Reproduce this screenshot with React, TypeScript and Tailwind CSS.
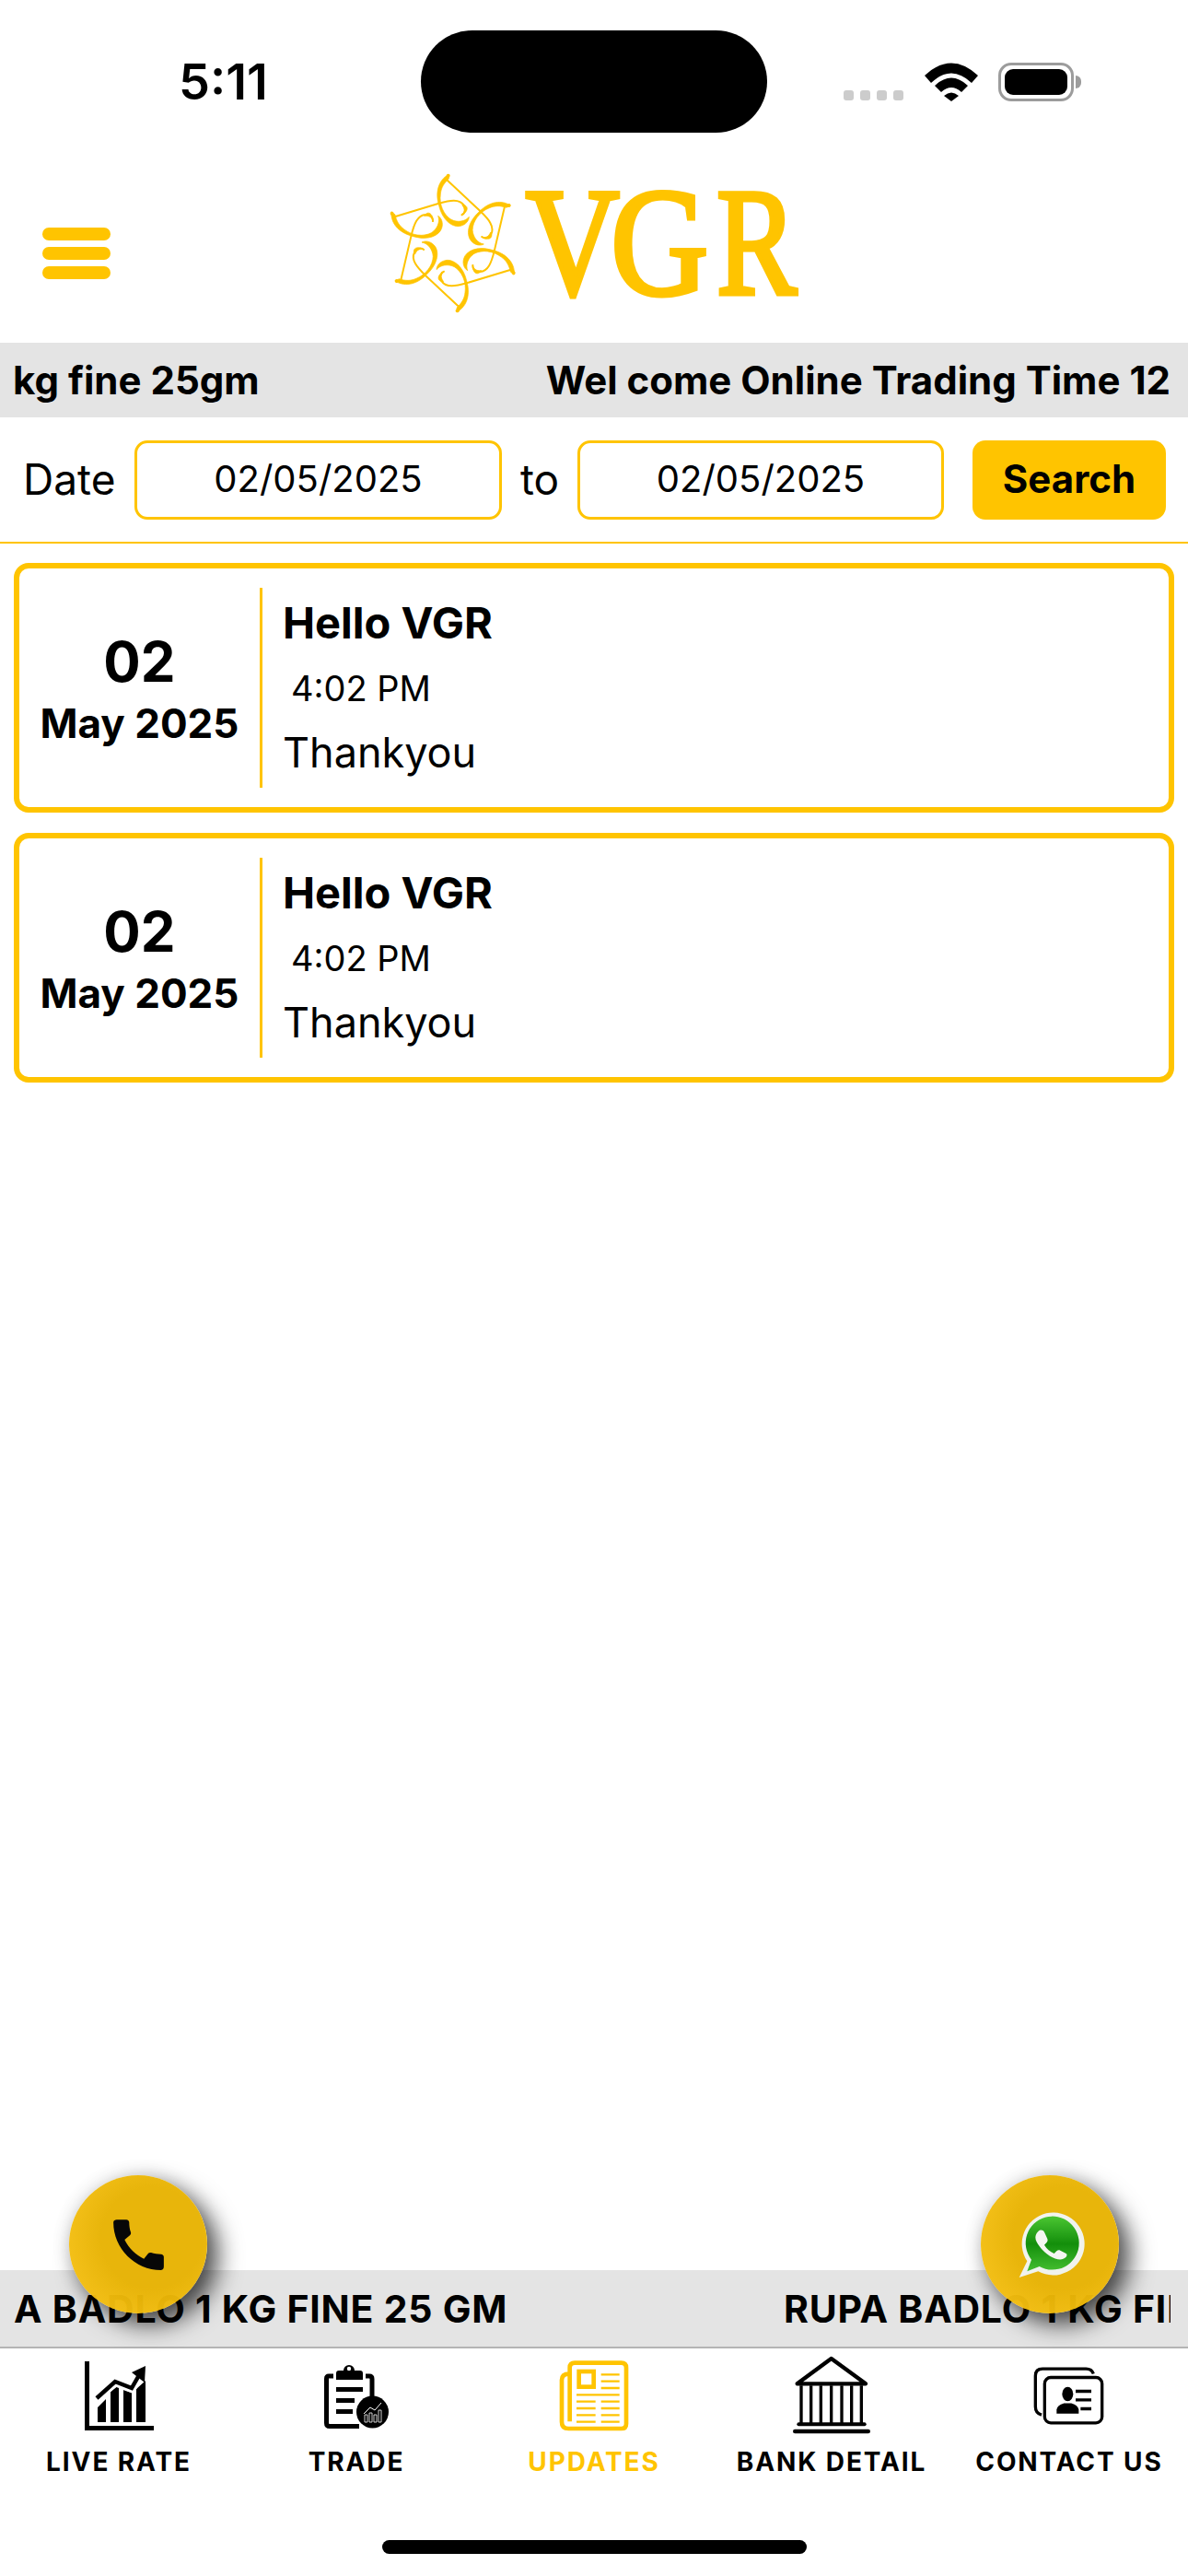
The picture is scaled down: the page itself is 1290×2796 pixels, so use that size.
import { MdCall } from "react-icons/md"

const sixArms = [0, 60, 120, 180, 240, 300]

function Logo() {
  return (
    <svg viewBox="120 51 1350 465" className="w-[450px] h-[155px] shrink-0">
      {/* star */}
      {sixArms.map((deg) => (
        <g key={deg} transform={`rotate(${deg} 335 282)`} className="fill-[#ffc400] stroke-[#ffc400]">
          <path d="M315 75 L425 178 C452 204 472 228 460 252 C452 268 436 268 428 260" fill="none" strokeWidth="6" />
          <path d="M428 260 C440 266 452 262 458 246 C470 262 452 278 428 260 Z" strokeWidth="2" />
          <path d="M322 58 C285 78 278 120 290 160 C302 210 336 232 360 226 C378 222 388 208 388 196 C375 212 350 215 330 205 C305 190 290 155 295 122 C297 102 305 88 322 72 Z" strokeWidth="2" />
          <circle cx="320" cy="62" r="6" stroke="none" />
        </g>
      ))}
      {/* wordmark */}
      <g className="fill-[#ffc400] stroke-[#ffc400] font-[family-name:'Liberation_Serif',serif]" strokeWidth="15">
        <text x="572" y="447" fontSize="500" textLength="306" lengthAdjust="spacingAndGlyphs">V</text>
        <text x="850" y="447" fontSize="500" textLength="318" lengthAdjust="spacingAndGlyphs">G</text>
        <text x="1194" y="447" fontSize="500" textLength="262" lengthAdjust="spacingAndGlyphs">R</text>
      </g>
    </svg>
  )
}

function LiveRateIcon() {
  return (
    <svg viewBox="0 0 75 75" className="w-[75px] h-[75px]">
      <path d="M0 0h5v70h70v5H0z" />
      <path d="M14 66V50l9-9v25zM28 66V33l9-7v40zM42 66V31l9 3v32zM56 66V30l10-9v45z" />
      <path d="M12 41L33 22L51 29L60 14" fill="none" stroke="#fff" strokeWidth="10" />
      <path d="M13 40L33 22L51 29L59 15" fill="none" stroke="#000" strokeWidth="4.5" />
      <path d="M66 5L51 12L65 23z" />
    </svg>
  )
}

function TradeIcon() {
  return (
    <svg viewBox="0 0 71 71" className="w-[71px] h-[71px]">
      <path d="M10 14H5Q2.500 14 2.500 17V65Q2.500 68.500 6 68.500H38" fill="none" stroke="#000" strokeWidth="5" />
      <path d="M45 14H49Q52 14 52 17V36" fill="none" stroke="#000" strokeWidth="5" />
      <path d="M13 18V11Q13 8 16 8H21A6 6 0 1 1 33 8H39Q42 8 42 11V18Z" />
      <circle cx="27" cy="6" r="2.200" fill="#fff" />
      <path d="M13 26h29v5H13zM13 38h20v5H13zM13 50h18v5H13z" />
      <circle cx="52.500" cy="53" r="17.500" />
      <path d="M43 55L50 48L55 51L62 43" fill="none" stroke="#fff" strokeWidth="1" />
      <path d="M44 56h3v8h-3zM49 54h3v10h-3zM54 56h3v8h-3zM59 51h3v13h-3z" fill="none" stroke="#fff" strokeWidth="0.800" />
    </svg>
  )
}

function UpdatesIcon() {
  return (
    <svg viewBox="45 30 240 240" className="w-[80px] h-[80px] fill-none stroke-[#ffc400]">
      <path d="M86 235V60Q86 44 102 44H254Q270 44 270 60V242Q270 258 254 258H82Q60 258 60 236V100Q60 80 84 80" strokeWidth="14" />
      <rect x="116" y="72" width="48" height="50" strokeWidth="14" />
      <path d="M188 82h60M188 104h60M188 126h60M108 148h140M108 170h62M188 170h60M108 192h62M188 192h60M108 214h62M188 214h60M108 236h62M188 236h60" strokeWidth="7" />
    </svg>
  )
}

function BankIcon() {
  return (
    <svg viewBox="120 22 258 264" className="w-[86px] h-[88px] fill-none stroke-black">
      <path d="M248 34L360 116H137Z" strokeWidth="13" strokeLinejoin="round" />
      <path d="M150 122V245M182 122V245M214 122V245M248 122V245M282 122V245M314 122V245M346 122V245" strokeWidth="10" />
      <path d="M142 248H356" strokeWidth="12" strokeLinecap="round" />
      <path d="M130 271H368" strokeWidth="14" strokeLinecap="round" />
    </svg>
  )
}

function ContactIcon() {
  return (
    <svg viewBox="905 50 240 200" className="w-[80px] h-[67px]">
      <path d="M935 212Q915 206 915 185V85Q915 62 938 62H1080Q1098 62 1104 78" fill="none" stroke="#000" strokeWidth="10" />
      <rect x="945" y="90" width="187" height="148" rx="20" fill="none" stroke="#000" strokeWidth="10" />
      <ellipse cx="1020" cy="144" rx="18" ry="23" />
      <path d="M984 208V195Q986 180 1008 174H1032Q1054 180 1056 195V208Z" />
      <path d="M1046 135H1097M1046 163H1097M1062 192H1097" fill="none" stroke="#000" strokeWidth="10" />
    </svg>
  )
}

function WhatsappLogo() {
  return (
    <svg viewBox="0 0 300 300" className="w-[100px] h-[100px]">
      <defs>
        <linearGradient id="waGreen" x1="0" y1="0" x2="0" y2="1">
          <stop offset="0" stopColor="#45c42c" />
          <stop offset="0.5" stopColor="#0c8b04" />
          <stop offset="1" stopColor="#3fbd2a" />
        </linearGradient>
      </defs>
      <path d="M50 258L76 205A102 102 0 1 1 112 238Z" fill="#f1f3ee" />
      <path d="M76 238L90 200A87 87 0 1 1 116 222Z" fill="url(#waGreen)" />
      <path d="M112 108C118 102 128 102 132 110L142 132C144 138 142 142 136 148L132 152C140 165 150 173 164 180L172 172C176 168 180 168 184 170L203 180C207 183 206 188 202 192C190 204 170 200 150 188C128 174 110 152 104 135C101 124 105 115 112 108Z" fill="#f4f6f1" />
    </svg>
  )
}

function NoticeCard() {
  return (
    <div className="h-[271px] border-[6px] border-[#ffc400] rounded-[16px] flex items-center">
      <div className="w-[261px] flex flex-col items-center text-black">
        <span className="text-[60px] leading-[70px] font-bold">02</span>
        <span className="text-[44px] leading-[52px] mt-[6px] font-bold">May 2025</span>
      </div>
      <div className="w-[3px] h-[217px] bg-[#ffc400]" />
      <div className="pl-[22px] flex flex-col text-black">
        <span className="text-[47px] leading-[56px] font-bold">Hello VGR</span>
        <span className="text-[38px] leading-[46px] mt-[20px] pl-[9px]">4:02 PM</span>
        <span className="text-[45px] leading-[56px] mt-[19px]">Thankyou</span>
      </div>
    </div>
  )
}

function TabItem({ label, active, children }: { label: string; active?: boolean; children: React.ReactNode }) {
  return (
    <div className="flex flex-col items-center">
      <div className="h-[84px] flex items-center justify-center">{children}</div>
      <span className={`mt-[13px] text-[28px] leading-[34px] font-bold tracking-[1.9px] whitespace-nowrap ${active ? "text-[#ffc400]" : "text-black"}`}>
        {label}
      </span>
    </div>
  )
}

export default function App() {
  return (
    <div className="relative w-[1290px] h-[2796px] bg-white flex flex-col overflow-hidden font-[family-name:Inter,sans-serif]">
      {/* status bar */}
      <div className="flex items-center pt-[33px]">
        <div className="w-[457px] pl-[194px] text-[54px] leading-[62px] font-semibold text-black">5:11</div>
        <div className="w-[376px] h-[111px] bg-black rounded-full" />
        <div className="flex items-end pl-[83px]">
          <div className="flex gap-[7px] mb-[1px]">
            <span className="w-[11px] h-[11px] rounded-[3px] bg-[#cccccc]" />
            <span className="w-[11px] h-[11px] rounded-[3px] bg-[#cccccc]" />
            <span className="w-[11px] h-[11px] rounded-[3px] bg-[#cccccc]" />
            <span className="w-[11px] h-[11px] rounded-[3px] bg-[#cccccc]" />
          </div>
          <svg viewBox="0 0 58 42" className="w-[58px] h-[42px] ml-[23px]">
            <path d="M0 14Q29 -13 58 14L51 22Q29 1 7 22Z" />
            <path d="M11 25Q29 8 47 25L40 32Q29 22 18 32Z" />
            <path d="M21 36Q29 29 37 36L29 42Z" />
          </svg>
          <div className="flex items-center ml-[22px]">
            <div className="w-[82px] h-[42px] rounded-[14px] border-[3px] border-[#9c9c9c] p-[4px]">
              <div className="w-full h-full rounded-[9px] bg-black" />
            </div>
            <div className="w-[6px] h-[14px] rounded-r-full bg-[#9c9c9c] ml-[2px]" />
          </div>
        </div>
      </div>

      {/* header */}
      <div className="h-[228px] flex pl-[46px] pt-[43px]">
        <div className="flex flex-col gap-[7px] w-[74px] mt-[60px]">
          <span className="h-[14px] rounded-full bg-[#ffc400]" />
          <span className="h-[14px] rounded-full bg-[#ffc400]" />
          <span className="h-[14px] rounded-full bg-[#ffc400]" />
        </div>
        <div className="ml-[300px]">
          <Logo />
        </div>
      </div>

      {/* top ticker */}
      <div className="h-[81px] bg-[#e4e4e4] pl-[14px] pr-[17px]">
        <div className="h-full overflow-hidden flex items-center whitespace-nowrap text-[42px] font-bold text-black">
          <span>kg fine 25gm</span>
          <span className="ml-[311px]">Wel come Online Trading Time 12:00</span>
        </div>
      </div>

      {/* date filter */}
      <div className="h-[137px] flex items-center pl-[25px] border-b-2 border-[#ffc400] text-black">
        <span className="w-[121px] text-[46px]">Date</span>
        <input readOnly value="02/05/2025" className="w-[399px] h-[86px] border-[3px] border-[#ffc400] rounded-[14px] text-center text-[40px] pb-[2px]" />
        <span className="w-[82px] pl-[20px] text-[46px]">to</span>
        <input readOnly value="02/05/2025" className="w-[398px] h-[86px] border-[3px] border-[#ffc400] rounded-[14px] text-center text-[40px] pb-[2px]" />
        <button className="ml-[31px] w-[210px] h-[86px] rounded-[14px] bg-[#ffc400] text-[42px] font-bold pb-[2px]">Search</button>
      </div>

      {/* notices */}
      <div className="flex-1 px-[15px] pt-[21px] flex flex-col gap-[22px]">
        <NoticeCard />
        <NoticeCard />
      </div>

      {/* bottom ticker */}
      <div className="h-[85px] bg-[#e4e4e4] pl-[15px] pr-[19px] border-b-2 border-[#b4b4b4]">
        <div className="h-full pt-[2px] overflow-hidden flex items-center whitespace-nowrap text-[41px] font-bold tracking-[0.75px] text-black">
          <span>A BADLO 1 KG FINE 25 GM</span>
          <span className="ml-[300px]">RUPA BADLO 1 KG FINE 25 GM</span>
        </div>
      </div>

      {/* tabs */}
      <div className="grid grid-cols-5 pt-[9px]">
        <TabItem label="LIVE RATE"><LiveRateIcon /></TabItem>
        <TabItem label="TRADE"><TradeIcon /></TabItem>
        <TabItem label="UPDATES" active><UpdatesIcon /></TabItem>
        <TabItem label="BANK DETAIL"><BankIcon /></TabItem>
        <TabItem label="CONTACT US"><ContactIcon /></TabItem>
      </div>

      {/* home indicator */}
      <div className="flex justify-center pt-[68px] pb-[24px]">
        <div className="w-[461px] h-[15px] rounded-full bg-black" />
      </div>

      {/* floating buttons */}
      <div className="absolute left-[75px] top-[2361px] w-[150px] h-[150px] rounded-full flex items-center justify-center opacity-[0.97] bg-[radial-gradient(circle_at_60%_45%,#e8b304_45%,#fdc71d_100%)] shadow-[12px_12px_26px_rgba(0,0,0,0.7),0_0_20px_rgba(0,0,0,0.12)]">
        <MdCall className="w-[73px] h-[73px] text-black" />
      </div>
      <div className="absolute left-[1065px] top-[2361px] w-[150px] h-[150px] rounded-full flex items-center justify-center opacity-[0.97] bg-[radial-gradient(circle_at_60%_45%,#e8b304_45%,#fdc71d_100%)] shadow-[12px_12px_26px_rgba(0,0,0,0.7),0_0_20px_rgba(0,0,0,0.12)]">
        <WhatsappLogo />
      </div>
    </div>
  )
}
